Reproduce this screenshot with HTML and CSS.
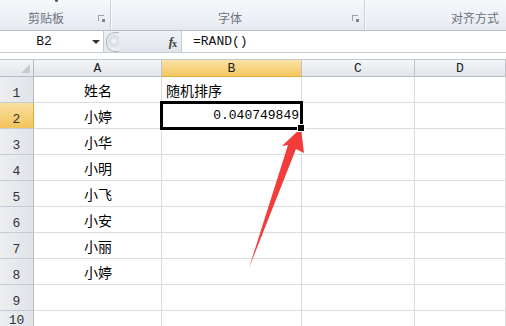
FILE: index.html
```
<!DOCTYPE html>
<html>
<head>
	<meta charset="UTF-8">
	<link rel="stylesheet" href="styles.css">
</head>
<body>
	<div id="ribbon">
		<div class="group g-clip">
			<span class="dot"></span>
			<span class="glabel">剪贴板</span>
			<span class="launcher"></span>
		</div>
		<div class="group g-font">
			<span class="glabel">字体</span>
			<span class="launcher"></span>
		</div>
		<div class="group g-align">
			<span class="glabel">对齐方式</span>
		</div>
	</div>
	<div id="fbar">
		<div class="namebox">
			<span class="nametext">B2</span>
			<span class="drop"></span>
		</div>
		<div class="fxarea">
			<span class="grip"></span>
			<span class="fx"><i>f</i><sub>x</sub></span>
		</div>
		<div class="formula">=RAND()</div>
	</div>
	<div id="sheet">
		<div class="corner"><span class="tri"></span></div>
		<div class="colhead">A</div>
		<div class="colhead sel">B</div>
		<div class="colhead">C</div>
		<div class="colhead">D</div>

		<div class="rowhead">1</div>
		<div class="cell center">姓名</div>
		<div class="cell">随机排序</div>
		<div class="cell"></div>
		<div class="cell"></div>

		<div class="rowhead sel">2</div>
		<div class="cell center">小婷</div>
		<div class="cell num active">0.040749849<span class="handle"></span></div>
		<div class="cell"></div>
		<div class="cell"></div>

		<div class="rowhead">3</div>
		<div class="cell center">小华</div>
		<div class="cell"></div>
		<div class="cell"></div>
		<div class="cell"></div>

		<div class="rowhead">4</div>
		<div class="cell center">小明</div>
		<div class="cell"></div>
		<div class="cell"></div>
		<div class="cell"></div>

		<div class="rowhead">5</div>
		<div class="cell center">小飞</div>
		<div class="cell"></div>
		<div class="cell"></div>
		<div class="cell"></div>

		<div class="rowhead">6</div>
		<div class="cell center">小安</div>
		<div class="cell"></div>
		<div class="cell"></div>
		<div class="cell"></div>

		<div class="rowhead">7</div>
		<div class="cell center">小丽</div>
		<div class="cell"></div>
		<div class="cell"></div>
		<div class="cell"></div>

		<div class="rowhead">8</div>
		<div class="cell center">小婷</div>
		<div class="cell"></div>
		<div class="cell"></div>
		<div class="cell"></div>

		<div class="rowhead">9</div>
		<div class="cell"></div>
		<div class="cell"></div>
		<div class="cell"></div>
		<div class="cell"></div>

		<div class="rowhead r10">10</div>
		<div class="cell"></div>
		<div class="cell"></div>
		<div class="cell"></div>
		<div class="cell"></div>
	</div>
	<svg class="arrow" width="506" height="326" viewBox="0 0 506 326">
		<polygon points="301,128 304,153 296,149 249,268 288,145 282,146" fill="#f23b3b"/>
	</svg>
</body>
</html>
```

FILE: styles.css
```
body {
	margin: 0;
	width: 506px;
	height: 326px;
	overflow: hidden;
	position: relative;
	background: #fff;
	font-family: "Liberation Mono", "Noto Sans CJK SC", monospace;
}

/* ribbon */
#ribbon {
	display: flex;
	height: 30px;
	background: linear-gradient(#f6f8fb, #e6eaf0);
	border-bottom: 1px solid #b6bec8;
}

.group {
	position: relative;
	display: flex;
	align-items: flex-end;
	padding-bottom: 4px;
	box-sizing: border-box;
	border-right: 1px solid #c9cfd7;
	box-shadow: 1px 0 0 #fbfcfd;
}

.g-clip {
	width: 111px;
	padding-left: 28px;
}

.g-font {
	width: 254px;
	padding-left: 107px;
}

.g-align {
	flex: 1;
	padding-left: 86px;
	border-right: none;
	box-shadow: none;
}

.dot {
	position: absolute;
	left: 55px;
	top: 0;
	width: 3px;
	height: 2px;
	border-radius: 0 0 2px 2px;
	background: #555;
}

.glabel {
	font-family: "Noto Sans CJK SC", sans-serif;
	font-size: 12px;
	line-height: 16px;
	color: #6b7380;
}

.launcher {
	position: absolute;
	right: 6px;
	bottom: 9px;
	width: 5px;
	height: 5px;
	border-left: 1px solid #9aa2ad;
	border-top: 1px solid #9aa2ad;
}

.launcher::after {
	content: "";
	position: absolute;
	right: -1px;
	bottom: -1px;
	width: 3px;
	height: 3px;
	background: #7d8591;
}

/* formula bar */
#fbar {
	display: flex;
	height: 21px;
	background: #fff;
	border-bottom: 1px solid #c6ccd4;
}

.namebox {
	width: 104px;
	display: flex;
	align-items: center;
	border-right: 1px solid #c6ccd4;
	box-sizing: border-box;
}

.nametext {
	flex: 1;
	text-align: center;
	font-size: 13px;
	color: #111;
	padding-right: 4px;
}

.drop {
	width: 0;
	height: 0;
	border-left: 4px solid transparent;
	border-right: 4px solid transparent;
	border-top: 4px solid #333;
	margin-right: 3px;
}

.fxarea {
	width: 78px;
	display: flex;
	align-items: center;
	justify-content: space-between;
	background: linear-gradient(#eef1f5, #e2e6ec);
	border-right: 1px solid #c6ccd4;
	padding: 0 5px 0 2px;
	box-sizing: border-box;
}

.grip {
	width: 12px;
	height: 18px;
	border-radius: 9px 0 0 9px;
	border: 1px solid #aeb6c0;
	border-right: none;
	background: radial-gradient(circle at 7px 8px, #fdfdfe 0, #d8dde3 4px, #eceff2 8px);
}

.fx {
	font-family: "Liberation Serif", serif;
	font-size: 13px;
	font-weight: bold;
	color: #444;
	letter-spacing: -1px;
}

.fx sub {
	font-size: 10px;
	vertical-align: -1px;
}

.formula {
	flex: 1;
	font-size: 13px;
	line-height: 21px;
	padding-left: 11px;
	color: #111;
}

/* sheet */
#sheet {
	margin-top: 6px;
	display: grid;
	grid-template-columns: 34px 128px 140px 113px 1fr;
	grid-template-rows: 17px repeat(10, 26px);
	border-top: 1px solid #c3c9d1;
	background: #fff;
}

#sheet > div {
	box-sizing: border-box;
	border-right: 1px solid #dadcdd;
	border-bottom: 1px solid #dadcdd;
}

.corner {
	position: relative;
	background: linear-gradient(#f3f4f6, #e4e7eb);
	border-right-color: #b5bcc6 !important;
	border-bottom-color: #b5bcc6 !important;
}

.tri {
	position: absolute;
	right: 3px;
	bottom: 3px;
	width: 0;
	height: 0;
	border-left: 9px solid transparent;
	border-bottom: 9px solid #c6cbd2;
}

.colhead {
	background: linear-gradient(#f5f6f8, #e2e5ea);
	border-right-color: #bcc3cc !important;
	border-bottom-color: #b5bcc6 !important;
	text-align: center;
	font-size: 13px;
	line-height: 17px;
	color: #222;
}

.rowhead {
	background: linear-gradient(90deg, #eceef1, #e0e3e8);
	border-right-color: #b5bcc6 !important;
	border-bottom-color: #c6ccd4 !important;
	display: flex;
	align-items: flex-end;
	justify-content: center;
	padding-bottom: 1px;
	font-size: 13px;
	color: #333;
}

.rowhead.r10 {
	align-items: flex-start;
	padding-top: 3px;
	line-height: 13px;
}

.colhead.sel {
	background: linear-gradient(#fbe3a5, #f3c660);
	border-bottom-color: #e0a93c !important;
}

.rowhead.sel {
	background: linear-gradient(#fbe0a0, #f2c35d);
	border-right-color: #e0a93c !important;
}

.cell {
	display: flex;
	align-items: flex-end;
	padding: 0 3px 4px 4px;
	font-family: "Noto Sans CJK SC", sans-serif;
	font-size: 14px;
	line-height: 16px;
	color: #000;
}

.cell.center {
	justify-content: center;
}

.cell.num {
	justify-content: flex-end;
	font-family: "Liberation Mono", monospace;
	font-size: 13px;
	padding-right: 2px;
}

.active {
	position: relative;
}

.active::after {
	content: "";
	position: absolute;
	left: -2px;
	top: -2px;
	right: -2px;
	bottom: -2px;
	border: 3px solid #000;
}

.handle {
	position: absolute;
	right: -4px;
	bottom: -4px;
	width: 6px;
	height: 6px;
	background: #000;
	border: 1px solid #fff;
	z-index: 2;
}

.arrow {
	position: absolute;
	left: 0;
	top: 0;
	pointer-events: none;
}
```
